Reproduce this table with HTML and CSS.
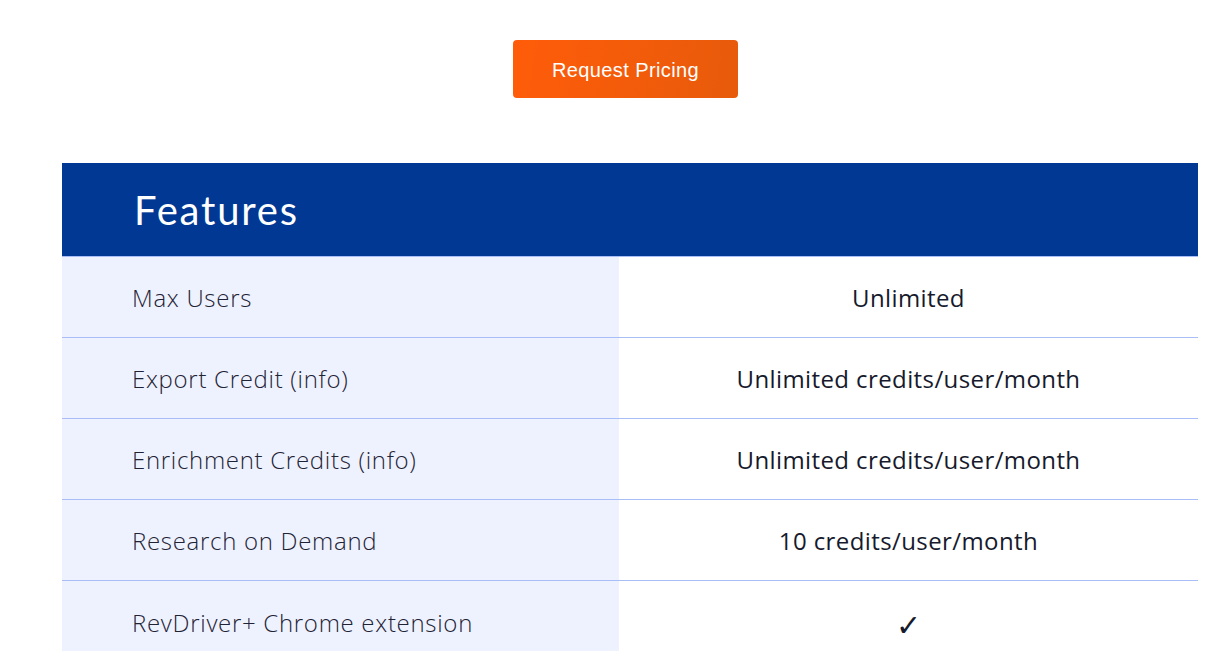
FILE: index.html
```html
<!DOCTYPE html>
<html lang="en">
<head>
<meta charset="utf-8">
<title>Features</title>
<link rel="stylesheet" href="styles.css">
</head>
<body>
<div class="page">
  <div class="cta">
    <a class="btn" href="#">Request Pricing</a>
  </div>
  <div class="table">
    <div class="head">Features</div>
    <div class="row">
      <div class="label">Max Users</div>
      <div class="value">Unlimited</div>
    </div>
    <div class="row">
      <div class="label">Export Credit (info)</div>
      <div class="value">Unlimited credits/user/month</div>
    </div>
    <div class="row">
      <div class="label">Enrichment Credits (info)</div>
      <div class="value">Unlimited credits/user/month</div>
    </div>
    <div class="row">
      <div class="label">Research on Demand</div>
      <div class="value">10 credits/user/month</div>
    </div>
    <div class="row">
      <div class="label">RevDriver+ Chrome extension</div>
      <div class="value check">✓</div>
    </div>
  </div>
</div>
</body>
</html>
```

FILE: styles.css
```css
html, body {
  margin: 0;
  padding: 0;
  background: #ffffff;
}
body {
  font-family: "Open Sans", Lato, sans-serif;
  color: #1c1f2e;
}
.page {
  padding: 40px 34px 0 62px;
}
.cta {
  display: flex;
  justify-content: center;
  padding-right: 9px;
}
.btn {
  display: flex;
  align-items: center;
  justify-content: center;
  width: 225px;
  height: 58px;
  box-sizing: border-box;
  padding-top: 3px;
  border-radius: 4px;
  background: linear-gradient(100deg, #ff5c09 0%, #e75b0b 100%);
  color: #ffffff;
  text-decoration: none;
  font-family: "Liberation Sans", Arial, sans-serif;
  font-size: 20px;
  letter-spacing: 0.4px;
}
.table {
  margin-top: 65px;
  width: 1136px;
}
.head {
  background: #003893;
  color: #ffffff;
  height: 94px;
  box-sizing: border-box;
  padding-left: 72px;
  display: flex;
  align-items: center;
  font-family: Lato, sans-serif;
  font-size: 40px;
  letter-spacing: 1.8px;
  font-weight: 400;
  border-bottom: 1px solid #a9bdf6;
}
.row {
  display: grid;
  grid-template-columns: 557px 1fr;
  height: 81px;
  box-sizing: border-box;
  border-bottom: 1px solid #a9bdf6;
}
.row:last-child {
  border-bottom: none;
}
.label {
  background: #eef2fe;
  padding-left: 70px;
  padding-top: 1px;
  display: flex;
  align-items: center;
  font-size: 24px;
  letter-spacing: 0.7px;
  font-weight: 300;
  color: #1f2336;
}
.value {
  display: flex;
  align-items: center;
  justify-content: center;
  padding-top: 1px;
  font-size: 24px;
  letter-spacing: 0.4px;
  font-weight: 500;
  color: #161a2c;
}
.check {
  font-family: "DejaVu Sans", sans-serif;
  font-weight: 700;
  font-size: 30px;
  letter-spacing: 0;
  padding-top: 8px;
}
```
